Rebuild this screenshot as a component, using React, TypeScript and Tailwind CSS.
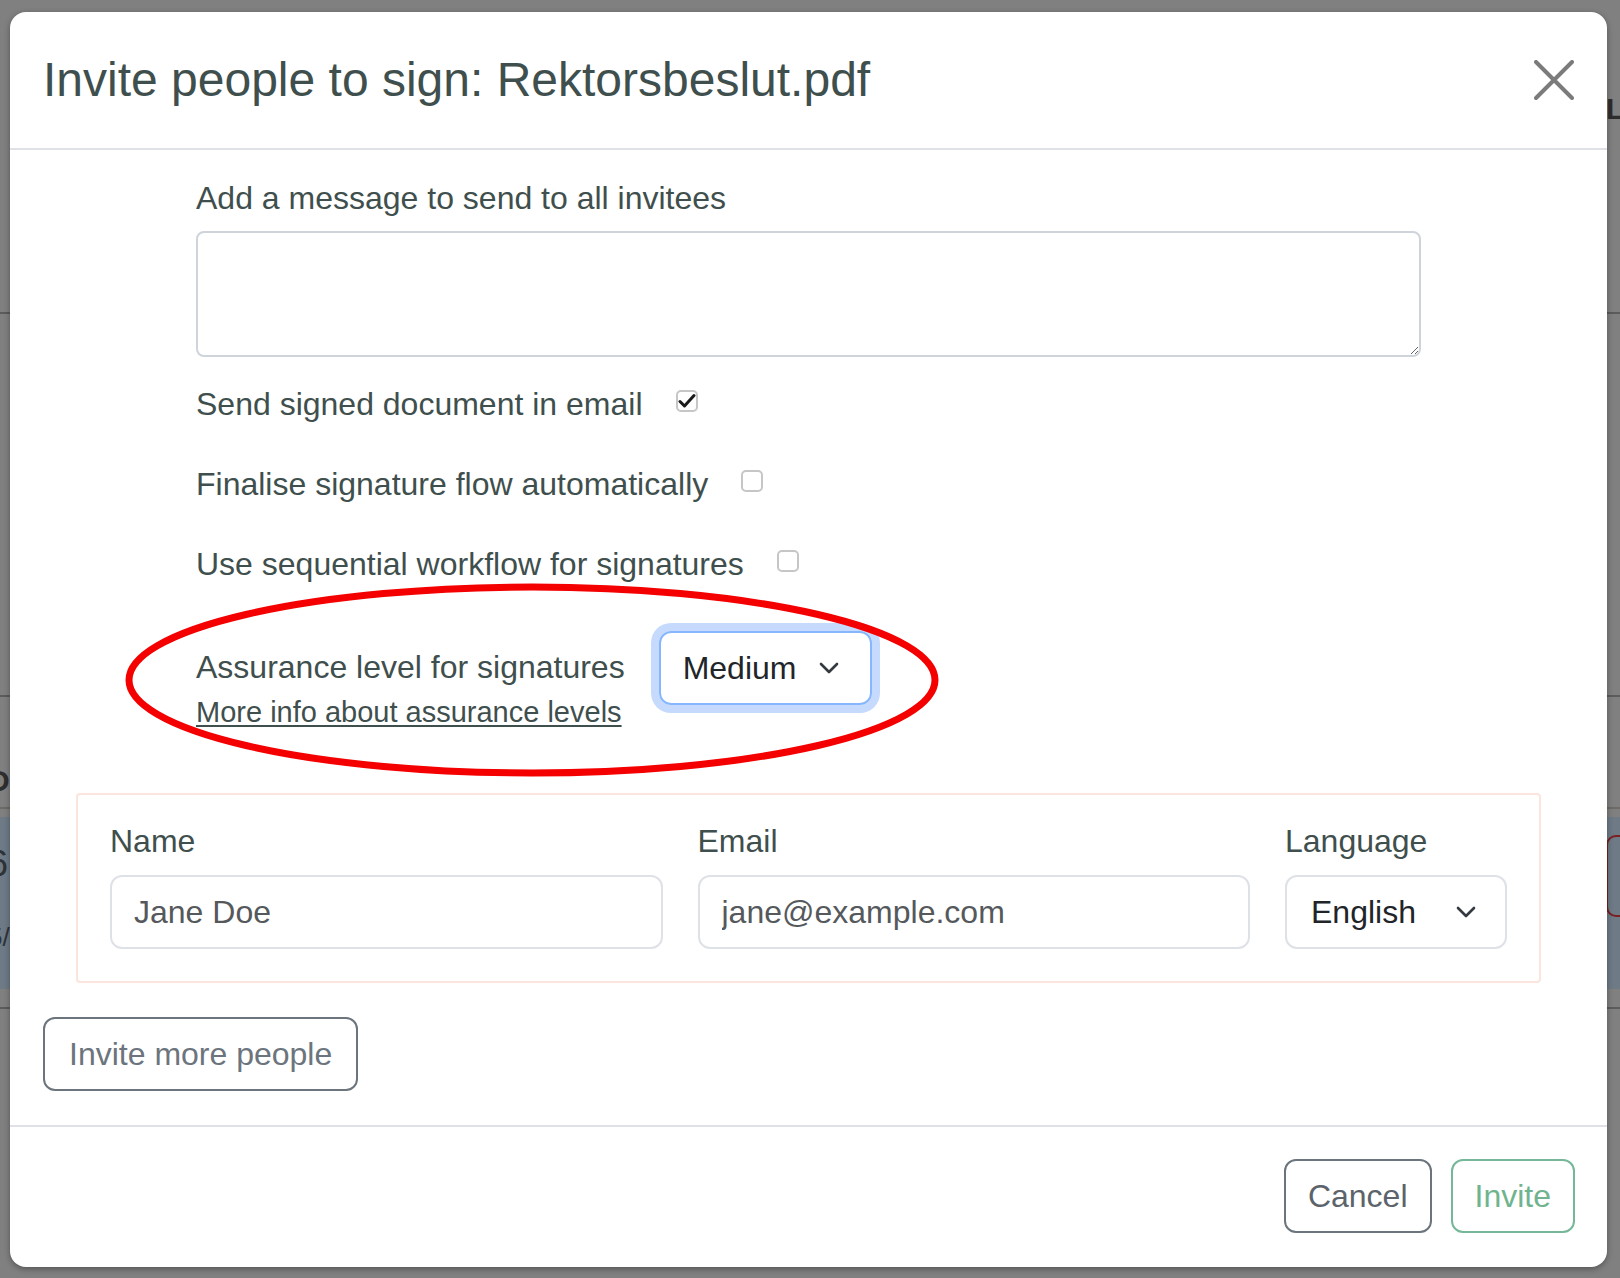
import React from 'react'

function Chevron() {
  return (
    <svg width="20" height="12" viewBox="0 0 20 12" fill="none" className="shrink-0">
      <path d="M2 2l8 8 8-8" stroke="#343a40" strokeWidth="2.6" strokeLinecap="round" strokeLinejoin="round" />
    </svg>
  )
}

function Box(props: { checked?: boolean }) {
  return (
    <span className="w-[22px] h-[22px] -mt-[6px] border-2 border-[#c6c6c6] rounded-[5px] bg-white flex items-center justify-center shrink-0">
      {props.checked && (
        <svg width="18" height="16" viewBox="0 0 18 16" fill="none">
          <path d="M2 8.5l4.5 4.5L16 2.5" stroke="#1a1a1a" strokeWidth="3" strokeLinecap="round" strokeLinejoin="round" />
        </svg>
      )}
    </span>
  )
}

function CheckRow(props: { label: string; checked?: boolean }) {
  return (
    <div className="flex items-center h-[48px]">
      <span className="mr-[33px]">{props.label}</span>
      <Box checked={props.checked} />
    </div>
  )
}

export default function App() {
  return (
    <div className="relative w-[1620px] h-[1278px] overflow-hidden bg-[#808080] font-['Liberation_Sans',Arial,sans-serif]">
      {/* page behind the backdrop */}
      <div className="flex flex-col">
        <div className="h-[314px] border-b-2 border-[#5c5c5c] pt-[86px] pl-[1606px]">
          <span className="text-[30px] font-bold text-[#2e2e2e]">Lists</span>
        </div>
        <div className="h-[383px] border-b-2 border-[#5c5c5c]" />
        <div className="h-[110px] flex items-end pb-[4px]">
          <span className="-ml-[12px] text-[30px] font-bold text-[#2e2e2e]">Du</span>
        </div>
        <div className="h-[10px] border-t-2 border-[#6e6a66]" />
        <div className="h-[172px] bg-[#6e7b87] flex justify-between items-start">
          <div className="flex flex-col pt-[23px] -ml-[12px] text-[#2e3338]">
            <span className="text-[36px] leading-[48px]">6</span>
            <span className="text-[26px] leading-[40px] mt-[29px]">5/</span>
          </div>
          <div className="mt-[18px] w-[60px] h-[82px] -mr-[46px] border-2 border-[#7a1f22] rounded-[10px]" />
        </div>
        <div className="h-[20px] border-b-2 border-[#5c5c5c]" />
      </div>

      {/* modal */}
      <div className="absolute left-[10px] top-[12px] w-[1597px] h-[1255px] bg-white rounded-[16px] shadow-[0_2px_6px_rgba(0,0,0,0.35)] flex flex-col text-[#3f4f4d]">
        <div className="h-[138px] shrink-0 border-b-2 border-[#dee2e6] flex items-center justify-between pl-[33px] pr-[33px]">
          <h1 className="text-[48px] leading-[58px] font-normal">Invite people to sign: Rektorsbeslut.pdf</h1>
          <svg width="40" height="40" viewBox="0 0 40 40" fill="none">
            <path d="M2 2l36 36M38 2L2 38" stroke="#7b7b7b" strokeWidth="4" strokeLinecap="round" />
          </svg>
        </div>

        <div className="px-[33px] pt-[24px] pb-[34px] text-[32px]">
          <div className="w-[1225px] mx-auto">
            <label className="block leading-[48px]">Add a message to send to all invitees</label>
            <textarea className="mt-[9px] block w-full h-[126px] border-2 border-[#ced4da] rounded-[8px] bg-white" />
            <div className="mt-[23px] flex flex-col gap-[32px]">
              <CheckRow label="Send signed document in email" checked />
              <CheckRow label="Finalise signature flow automatically" />
              <CheckRow label="Use sequential workflow for signatures" />
            </div>
            <div className="mt-[43px] flex items-start">
              <div className="pt-[12px] flex flex-col">
                <span className="leading-[48px]">Assurance level for signatures</span>
                <a className="text-[29px] leading-[42px] underline underline-offset-[3px] decoration-2">More info about assurance levels</a>
              </div>
              <div className="ml-[34px] w-[213px] h-[74px] border-2 border-[#86b7fe] rounded-[12px] shadow-[0_0_0_8px_#c5dafd] flex items-center justify-between pl-[22px] pr-[31px] text-[#212529]">
                <span>Medium</span>
                <Chevron />
              </div>
            </div>
          </div>

          <div className="mt-[60px] mx-[33px] border-2 border-[#fce5dc] rounded-[4px] px-[32px] pt-[22px] pb-[32px] flex gap-[35px]">
            <div className="flex-1 flex flex-col">
              <label className="leading-[48px] mb-[10px]">Name</label>
              <input
                defaultValue="Jane Doe"
                className="h-[74px] border-2 border-[#dee2e6] rounded-[12px] px-[22px] text-[#55595c] outline-none"
              />
            </div>
            <div className="flex-1 flex flex-col">
              <label className="leading-[48px] mb-[10px]">Email</label>
              <input
                defaultValue="jane@example.com"
                className="h-[74px] border-2 border-[#dee2e6] rounded-[12px] px-[22px] text-[#55595c] outline-none"
              />
            </div>
            <div className="w-[222px] flex flex-col">
              <label className="leading-[48px] mb-[10px]">Language</label>
              <div className="h-[74px] border-2 border-[#dee2e6] rounded-[12px] pl-[24px] pr-[29px] flex items-center justify-between text-[#212529]">
                <span>English</span>
                <Chevron />
              </div>
            </div>
          </div>

          <button className="mt-[34px] h-[74px] px-[24px] border-2 border-[#6c757d] rounded-[12px] text-[#6c757d] bg-white">
            Invite more people
          </button>
        </div>

        <div className="border-t-2 border-[#dee2e6] pt-[32px] pb-[34px] pr-[32px] flex justify-end gap-[19px] text-[32px]">
          <button className="h-[74px] px-[22px] border-2 border-[#6c757d] rounded-[12px] text-[#5c636a] bg-white">Cancel</button>
          <button className="h-[74px] px-[22px] border-2 border-[#75b798] rounded-[12px] text-[#6fb48e] bg-white">Invite</button>
        </div>
      </div>

      {/* red annotation */}
      <svg className="absolute left-[120px] top-[578px]" width="824" height="204" viewBox="0 0 824 204" fill="none">
        <ellipse cx="412" cy="102" rx="403" ry="93" stroke="#f40000" strokeWidth="7" />
      </svg>
    </div>
  )
}
